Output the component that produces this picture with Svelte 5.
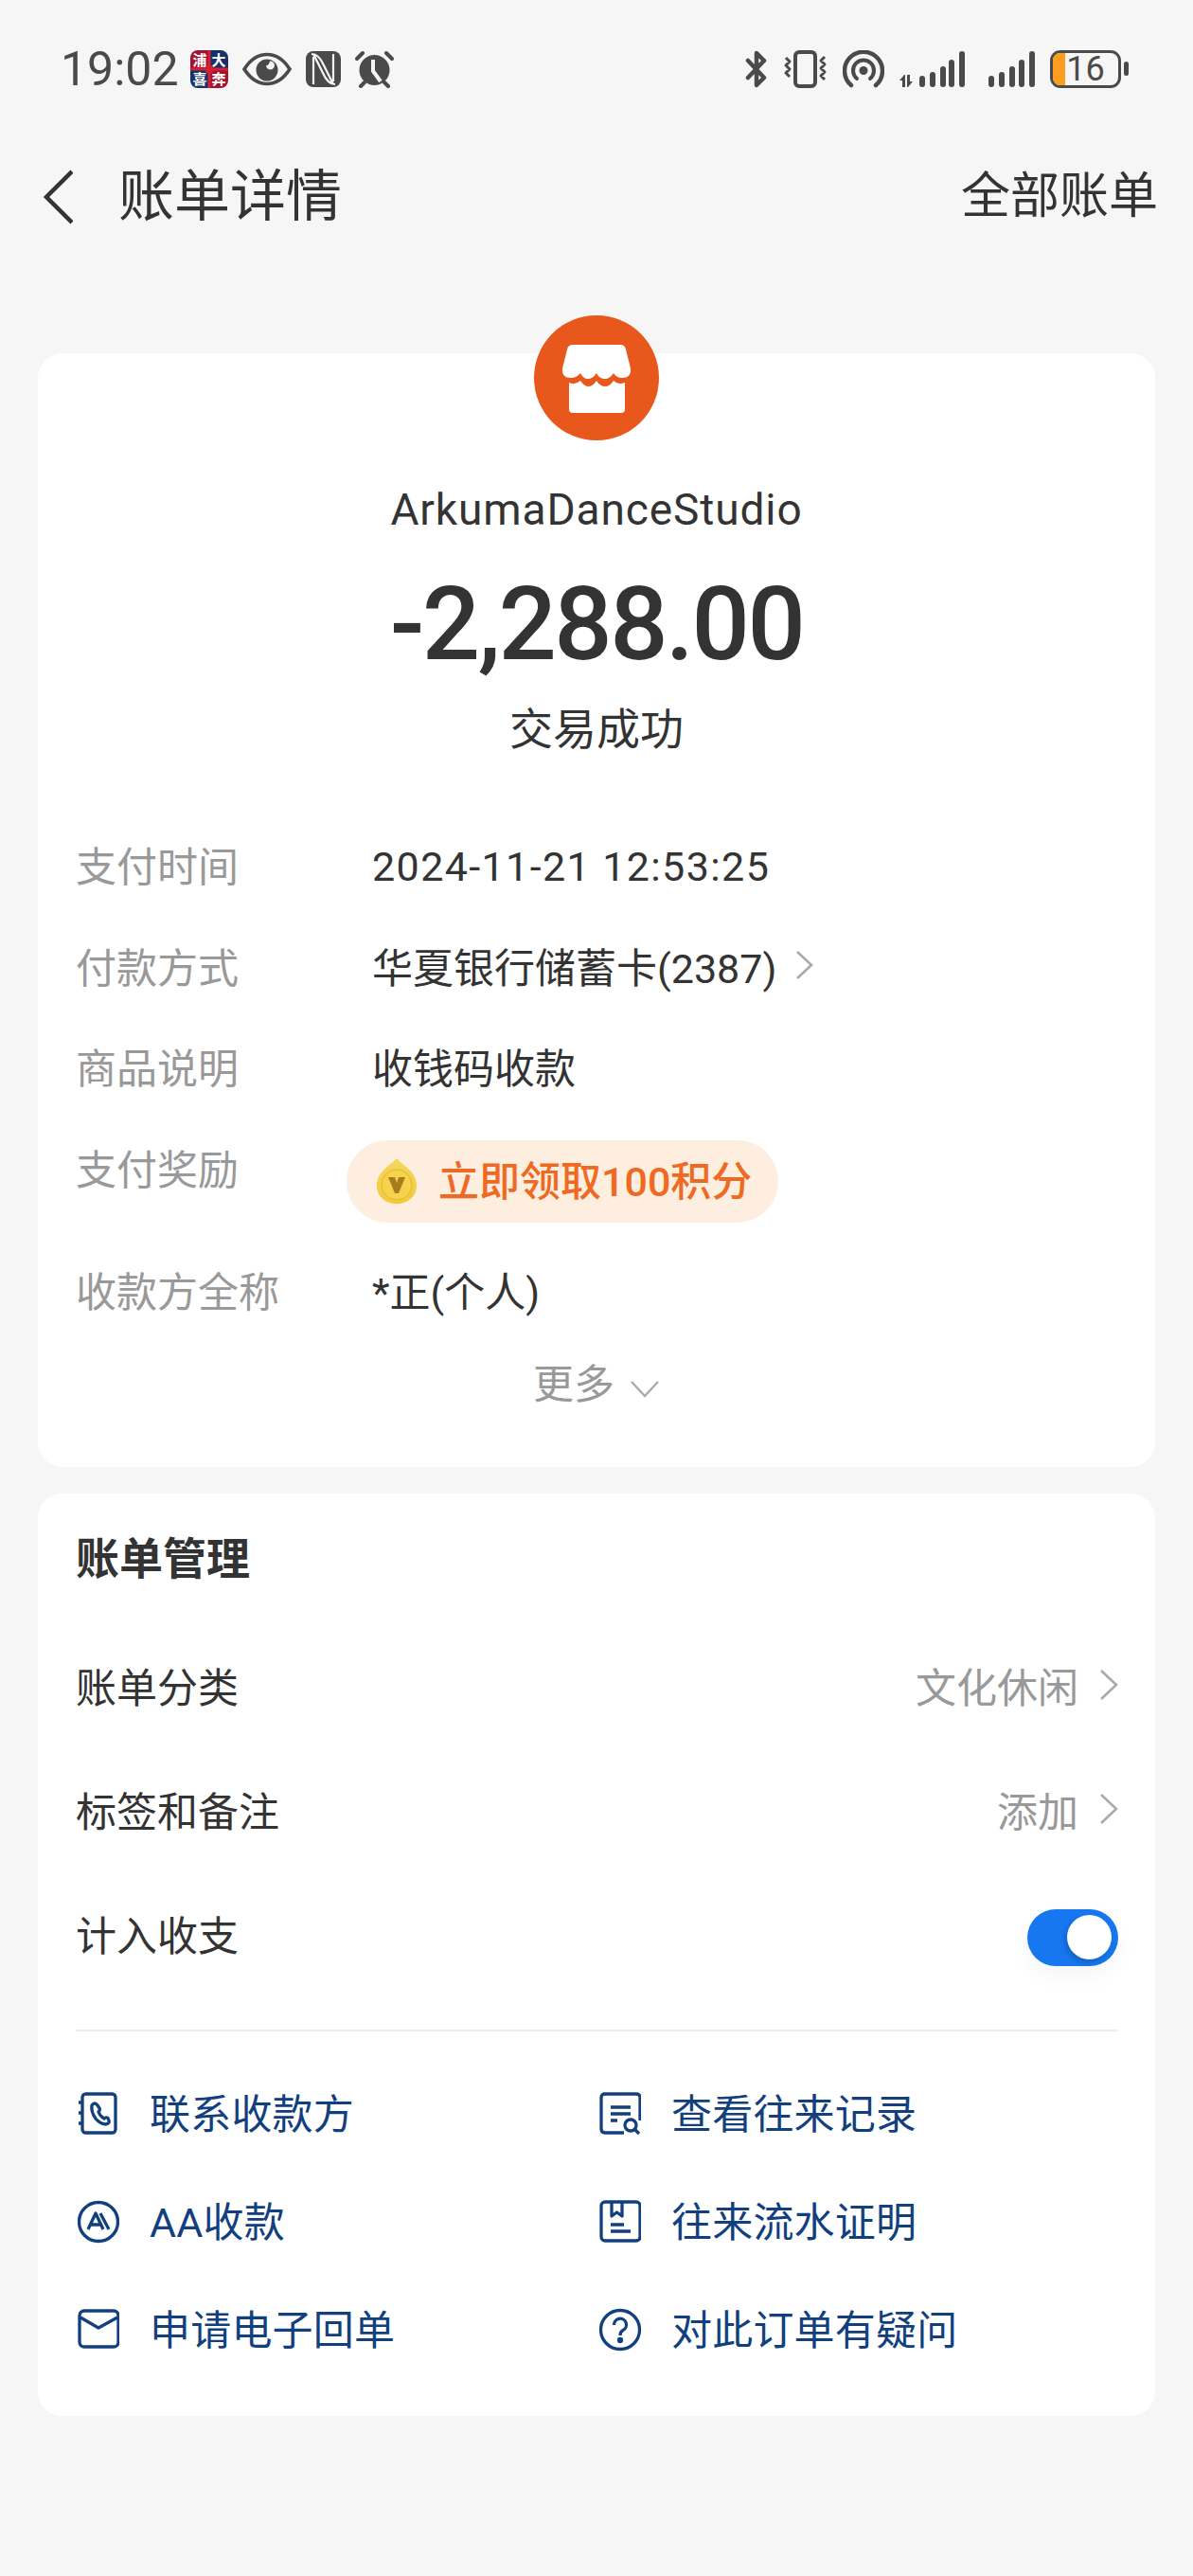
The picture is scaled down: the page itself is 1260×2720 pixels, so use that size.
<script>
	const rows = [
		{ label: '支付时间', value: '2024-11-21 12:53:25', date: true },
		{ label: '付款方式', value: '华夏银行储蓄卡(2387)', arrow: true },
		{ label: '商品说明', value: '收钱码收款' }
	];
</script>

<div class="page">
	<header class="status">
		<div class="status-left">
			<span class="time">19:02</span>
			<svg class="app" width="40" height="40" viewBox="0 0 40 40">
				<defs><clipPath id="appclip"><rect width="40" height="40" rx="8" /></clipPath></defs>
				<g clip-path="url(#appclip)">
					<rect width="20" height="20" fill="#a5122f" />
					<rect x="20" width="20" height="20" fill="#14336c" />
					<rect y="20" width="20" height="20" fill="#14336c" />
					<rect x="20" y="20" width="20" height="20" fill="#a5122f" />
				</g>
				<text x="10" y="16" class="app-ch">浦</text>
				<text x="30" y="16" class="app-ch">大</text>
				<text x="10" y="36" class="app-ch">喜</text>
				<text x="30" y="36" class="app-ch">奔</text>
				<rect x="18.500" width="3" height="40" fill="#d81f32" />
				<rect y="18.500" width="40" height="3" fill="#d81f32" />
				<circle cx="20" cy="20" r="4.500" fill="#d81f32" />
			</svg>
			<svg width="52" height="36" viewBox="0 0 52 36">
				<path d="M2 18C9 7 17 2.500 26 2.500S43 7 50 18C43 29 35 33.500 26 33.500S9 29 2 18Z" fill="none" stroke="#4a4a4a" stroke-width="3.600" />
				<path fill="#4a4a4a" fill-rule="evenodd" d="M26 7.500a11.500 11.500 0 1 0 11.500 11.500A11.500 11.500 0 0 0 26 7.500ZM29 9.500a4.500 4.500 0 1 1-4 5a6 6 0 0 0 4-5Z" />
			</svg>
			<svg width="37" height="38" viewBox="0 0 37 38">
				<rect width="37" height="38" rx="8" fill="#4a4a4a" />
				<path d="M6 3C12 3 16 8 19 15L29 35M31 35C25 35 21 30 18 23L8 3" fill="none" stroke="#f6f6f6" stroke-width="2.200" />
				<path d="M8 6V35M29 3V32" fill="none" stroke="#f6f6f6" stroke-width="2.200" />
			</svg>
			<svg width="41" height="40" viewBox="0 0 41 40">
				<circle cx="20.500" cy="21" r="16" fill="#4a4a4a" />
				<path d="M19 10V22L27 33" fill="none" stroke="#f6f6f6" stroke-width="4" />
				<path d="M2 9L8 3M39 9L33 3M6 38L10 34M35 38L31 34" stroke="#4a4a4a" stroke-width="4" stroke-linecap="round" />
			</svg>
		</div>
		<div class="status-right">
			<svg width="24" height="40" viewBox="0 0 24 40">
				<path d="M3 11L20 29L12 37V3L20 11L3 29" fill="none" stroke="#4a4a4a" stroke-width="4.500" stroke-linejoin="round" stroke-linecap="round" />
			</svg>
			<svg width="47" height="40" viewBox="0 0 47 40">
				<rect x="13" y="2" width="21" height="36" rx="4" fill="none" stroke="#4a4a4a" stroke-width="4" />
				<path d="M3 8L7 12L3 16L7 20L3 24L7 28M44 7L40 11L44 15L40 19L44 23L40 27L44 31" fill="none" stroke="#4a4a4a" stroke-width="3" stroke-linejoin="round" />
			</svg>
			<svg width="44" height="40" viewBox="0 0 44 40">
				<path d="M9 37A20 20 0 1 1 35 37" fill="none" stroke="#4a4a4a" stroke-width="4.500" stroke-linecap="round" />
				<path d="M15 30A11 11 0 1 1 29 30" fill="none" stroke="#4a4a4a" stroke-width="4" stroke-linecap="round" />
				<circle cx="22" cy="21.500" r="4.500" fill="#4a4a4a" />
			</svg>
			<svg class="sig1" width="70" height="40" viewBox="0 0 70 40" fill="#4a4a4a">
				<path d="M5 26L0 32H3V39H6V26ZM9 39L14 33H11V26H8V39Z" />
				<rect x="21" y="27" width="6" height="12" rx="3" />
				<rect x="32" y="23" width="6" height="16" rx="3" />
				<rect x="43" y="17" width="6" height="22" rx="3" />
				<rect x="52" y="10" width="6" height="29" rx="3" />
				<rect x="63" y="1" width="6" height="38" rx="3" />
			</svg>
			<svg class="sig2" width="49" height="40" viewBox="0 0 49 40" fill="#4a4a4a">
				<rect x="0" y="27" width="6" height="12" rx="3" />
				<rect x="11" y="23" width="6" height="16" rx="3" />
				<rect x="22" y="17" width="6" height="22" rx="3" />
				<rect x="32" y="10" width="6" height="29" rx="3" />
				<rect x="43" y="1" width="6" height="38" rx="3" />
			</svg>
			<div class="battery">
				<div class="battery-body">
					<span class="battery-fill"></span>
					<span class="battery-num">16</span>
				</div>
				<span class="battery-nub"></span>
			</div>
		</div>
	</header>

	<nav class="nav">
		<div class="nav-left">
			<svg width="32" height="58" viewBox="0 0 32 58">
				<path d="M31 2L4 29L31 56" fill="none" stroke="#333" stroke-width="4.500" />
			</svg>
			<h1>账单详情</h1>
		</div>
		<span class="all">全部账单</span>
	</nav>

	<section class="card summary">
		<svg class="avatar" width="132" height="132" viewBox="0 0 132 132">
			<circle cx="66" cy="66" r="66" fill="#e8581c" />
			<path fill="#fff" d="M41 31H91Q96 31 97 36L102 56Q103 66 93 66Q87 66 84 61Q80 67 75 67Q69 67 66 61Q62 67 57 67Q52 67 49 61Q45 66 39 66Q29 66 30 56L35 36Q36 31 41 31Z" />
			<path fill="#fff" d="M37 71Q43 74 49 69Q53 75 57.500 75Q62 75 66 69Q70 75 75 75Q80 75 84 69Q89 74 96 71V99Q96 103 92 103H41Q37 103 37 99Z" />
		</svg>
		<div class="merchant">ArkumaDanceStudio</div>
		<div class="amount">-2,288.00</div>
		<div class="state">交易成功</div>

		<div class="rows">
			{#each rows as row}
				<div class="row">
					<span class="label">{row.label}</span>
					<span class="value" class:date={row.date}>{row.value}</span>
					{#if row.arrow}
						<svg class="pay-arrow" width="20" height="32" viewBox="0 0 20 32">
							<path d="M3 2L18 16L3 30" fill="none" stroke="#aaa" stroke-width="2.600" />
						</svg>
					{/if}
				</div>
			{/each}
			<div class="row reward">
				<span class="label">支付奖励</span>
				<div class="pill">
					<svg width="44" height="50" viewBox="0 0 44 50">
						<defs>
							<linearGradient id="coin" x1="0" y1="0" x2="0" y2="1">
								<stop offset="0" stop-color="#f3d75e" />
								<stop offset="1" stop-color="#f6c93a" />
							</linearGradient>
						</defs>
						<path d="M22 1C27 8 43 14 43 30C43 42 33 49 22 49S1 42 1 30C1 14 17 8 22 1Z" fill="url(#coin)" />
						<circle cx="22" cy="29" r="16" fill="#f5d34d" stroke="#e5b52c" stroke-width="1" />
						<path d="M13 21H20L22 27L24 21H31L24 38H20Z" fill="#a87c1e" />
					</svg>
					<span>立即领取100积分</span>
				</div>
			</div>
			<div class="row">
				<span class="label">收款方全称</span>
				<span class="value">*正(个人)</span>
			</div>
		</div>

		<div class="more">
			<span>更多</span>
			<svg width="32" height="20" viewBox="0 0 32 20">
				<path d="M2 3L16 18L30 3" fill="none" stroke="#aaa" stroke-width="2.400" />
			</svg>
		</div>
	</section>

	<section class="card manage">
		<h2>账单管理</h2>
		<div class="setting first">
			<span>账单分类</span>
			<span class="setting-right">
				<span class="muted">文化休闲</span>
				<svg width="20" height="34" viewBox="0 0 20 34">
					<path d="M2 2L18 17L2 32" fill="none" stroke="#aaa" stroke-width="2.600" />
				</svg>
			</span>
		</div>
		<div class="setting">
			<span>标签和备注</span>
			<span class="setting-right">
				<span class="muted">添加</span>
				<svg width="20" height="34" viewBox="0 0 20 34">
					<path d="M2 2L18 17L2 32" fill="none" stroke="#aaa" stroke-width="2.600" />
				</svg>
			</span>
		</div>
		<div class="setting">
			<span>计入收支</span>
			<span class="toggle"><span class="knob"></span></span>
		</div>
		<div class="divider"></div>

		<div class="actions">
			<div class="action">
				<svg class="ic" width="44" height="46" viewBox="0 0 44 46">
					<rect x="5" y="2" width="35" height="41" rx="3.500" />
					<path d="M1 11H6M1 22H6M1 33H6" />
					<path d="M15 14Q18 10 21 14L23 17Q24 19 22 21Q24 26 28 28Q30 26 32 27.500L33 30Q34 33 30 34Q24 34 19 28Q14 21 15 14Z" />
				</svg>
				<span>联系收款方</span>
			</div>
			<div class="action">
				<svg class="ic" width="44" height="46" viewBox="0 0 44 46">
					<path d="M43 30V6Q43 2 39 2H6Q2 2 2 6V39Q2 43 6 43H26" />
					<path d="M12 16H33M12 23H33M12 30H19" />
					<circle cx="33" cy="35" r="6" />
					<path d="M37.500 39.500L42 44" />
				</svg>
				<span>查看往来记录</span>
			</div>
			<div class="action">
				<svg class="ic" width="44" height="46" viewBox="0 0 44 46">
					<circle cx="22" cy="23" r="20.500" />
					<path d="M11 31L19 14L27 31M14 26H24M24 14L33 31" />
				</svg>
				<span>AA收款</span>
			</div>
			<div class="action">
				<svg class="ic" width="44" height="46" viewBox="0 0 44 46">
					<rect x="2" y="2" width="41" height="41" rx="4" />
					<path d="M13 2V17L18.500 13L24 17V2M12 26H26M12 33H33" />
				</svg>
				<span>往来流水证明</span>
			</div>
			<div class="action">
				<svg class="ic" width="44" height="46" viewBox="0 0 44 46">
					<rect x="2" y="3" width="41" height="38" rx="5" />
					<path d="M3 10L22 21L42 10" />
				</svg>
				<span>申请电子回单</span>
			</div>
			<div class="action">
				<svg class="ic" width="44" height="46" viewBox="0 0 44 46">
					<circle cx="22" cy="23" r="20.500" />
					<path d="M15.500 18A6.500 6.500 0 1 1 25 23.500Q22 25 22 29" />
					<circle class="dot" cx="22" cy="34" r="1.500" />
				</svg>
				<span>对此订单有疑问</span>
			</div>
		</div>
	</section>
</div>

<style>
	:global(body) {
		margin: 0;
		background: #f6f6f6;
	}

	.page {
		min-height: 2720px;
		background: #f6f6f6;
		color: #333;
		font-family: Roboto, 'Noto Sans CJK SC', sans-serif;
		font-weight: 400;
	}

	.status {
		height: 145px;
		box-sizing: border-box;
		padding: 0 68px 0 64px;
		display: flex;
		align-items: center;
		justify-content: space-between;
		color: #4a4a4a;
	}

	.status-left,
	.status-right {
		display: flex;
		align-items: center;
		gap: 15px;
	}

	.status-right {
		gap: 16px;
	}

	.sig2 {
		margin-left: 8px;
	}

	.time {
		font-size: 50px;
		line-height: 60px;
		width: 122px;
	}

	.app-ch {
		font-family: 'Noto Sans CJK SC', sans-serif;
		font-size: 15px;
		font-weight: 700;
		fill: #fff;
		text-anchor: middle;
	}

	.battery {
		display: flex;
		align-items: center;
		gap: 3px;
	}

	.battery-body {
		position: relative;
		width: 75px;
		height: 40px;
		box-sizing: border-box;
		border: 3px solid #4a4a4a;
		border-radius: 11px;
		overflow: hidden;
		display: flex;
		align-items: center;
		justify-content: center;
	}

	.battery-fill {
		position: absolute;
		left: 0;
		top: 0;
		bottom: 0;
		width: 13px;
		background: #fb9d1f;
	}

	.battery-num {
		position: relative;
		font-size: 36px;
		line-height: 34px;
		color: #4a4a4a;
	}

	.battery-nub {
		width: 5px;
		height: 15px;
		border-radius: 3px;
		background: #4a4a4a;
	}

	.nav {
		height: 125px;
		box-sizing: border-box;
		padding: 0 37px 0 45px;
		display: flex;
		align-items: center;
		justify-content: space-between;
	}

	.nav-left {
		display: flex;
		align-items: center;
		gap: 48px;
	}

	h1 {
		margin: 0;
		font-size: 59px;
		line-height: 70px;
		font-weight: 400;
	}

	.all {
		font-size: 52px;
		line-height: 70px;
	}

	.card {
		margin: 0 40px;
		background: #fff;
		border-radius: 26px;
		box-sizing: border-box;
	}

	.summary {
		margin-top: 103px;
		height: 1176px;
		padding: 0 40px;
		display: flex;
		flex-direction: column;
		align-items: center;
	}

	.avatar {
		margin-top: -40px;
		flex: none;
	}

	.merchant {
		margin-top: 43px;
		font-size: 46px;
		line-height: 60px;
		letter-spacing: 0.9px;
	}

	.amount {
		margin-top: 36px;
		font-size: 108px;
		line-height: 110px;
		font-weight: 500;
		letter-spacing: -2.500px;
	}

	.state {
		margin-top: 26px;
		font-size: 46px;
		line-height: 60px;
	}

	.rows {
		margin-top: 59px;
		width: 100%;
	}

	.row {
		height: 106.500px;
		display: flex;
		align-items: center;
		font-size: 43px;
	}

	.label {
		width: 313px;
		flex: none;
		color: #999;
	}

	.value {
		color: #333;
	}

	.date {
		padding-top: 6px;
		letter-spacing: 1.400px;
	}

	.pay-arrow {
		margin-left: 19px;
	}

	.reward {
		height: 129px;
		align-items: flex-start;
	}

	.reward .label {
		line-height: 114px;
	}

	.pill {
		margin: 25px 0 0 -27px;
		height: 87px;
		width: 456px;
		box-sizing: border-box;
		padding-left: 31px;
		border-radius: 44px;
		background: #fdeee0;
		color: #ee6a22;
		font-weight: 500;
		display: flex;
		align-items: center;
		gap: 22px;
		white-space: nowrap;
	}

	.pill span {
		margin-top: -7px;
	}

	.more {
		margin-top: 18px;
		color: #999;
		font-size: 43px;
		line-height: 60px;
		display: flex;
		align-items: center;
		gap: 16px;
	}

	.more svg {
		margin-top: 8px;
	}

	.manage {
		margin-top: 28px;
		height: 974px;
		padding: 39px 39px 0 40px;
	}

	h2 {
		margin: 0;
		font-size: 46px;
		line-height: 60px;
		font-weight: 700;
	}

	.setting {
		height: 131px;
		display: flex;
		align-items: center;
		justify-content: space-between;
		font-size: 43px;
	}

	.setting.first {
		margin-top: 37.500px;
	}

	.setting-right {
		display: flex;
		align-items: center;
		gap: 22px;
	}

	.muted {
		color: #999;
	}

	.toggle {
		position: relative;
		width: 96px;
		height: 60px;
		margin-top: 9px;
		border-radius: 30px;
		background: #1677f0;
		box-shadow: 0 10px 24px rgba(0, 0, 0, 0.04);
	}

	.knob {
		position: absolute;
		right: 7px;
		top: 6px;
		width: 47px;
		height: 47px;
		border-radius: 50%;
		background: #fff;
		box-shadow: -2px 3px 6px rgba(0, 0, 0, 0.2);
	}

	.divider {
		margin-top: 36.500px;
		height: 2px;
		background: #eee;
	}

	.actions {
		margin-top: 30px;
		display: grid;
		grid-template-columns: 551px 1fr;
		grid-auto-rows: 114px;
	}

	.action {
		display: flex;
		align-items: center;
		gap: 32px;
		color: #123f7e;
		font-size: 43px;
		letter-spacing: 0.2px;
		padding-left: 2px;
	}

	.action span {
		margin-top: -7px;
	}

	.ic {
		flex: none;
		fill: none;
		stroke: #123f7e;
		stroke-width: 3.300;
		stroke-linejoin: round;
	}

	.ic .dot {
		fill: #123f7e;
	}
</style>
